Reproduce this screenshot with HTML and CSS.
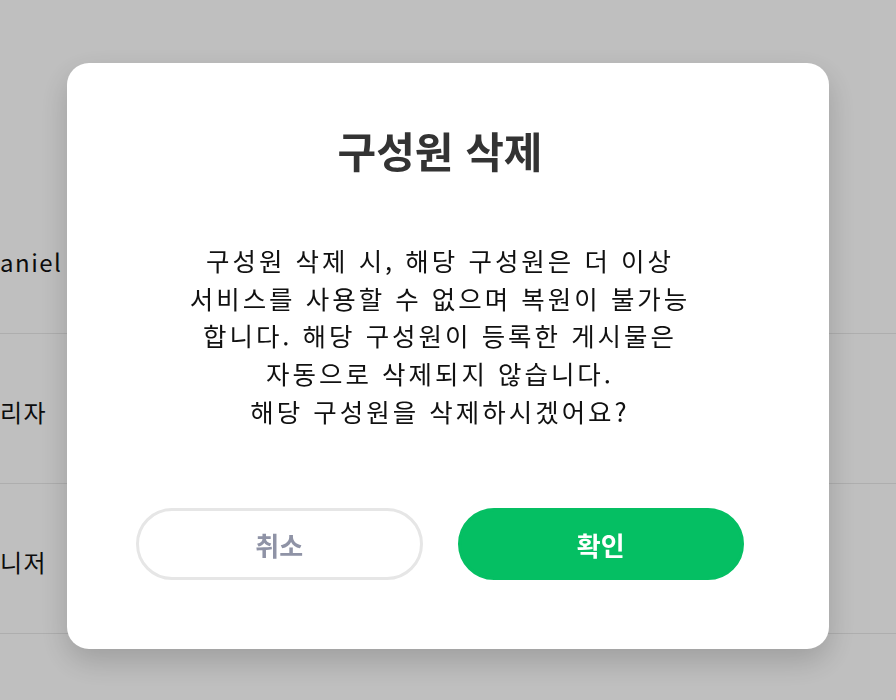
FILE: index.html
```html
<!DOCTYPE html>
<html lang="ko">
<head>
<meta charset="utf-8">
<title>구성원 삭제</title>
<link rel="stylesheet" href="styles.css">
</head>
<body>
<div class="page">
  <div class="header"></div>
  <ul class="members">
    <li class="row"><span class="name">aniel</span></li>
    <li class="row"><span class="name">리자</span></li>
    <li class="row"><span class="name">니저</span></li>
  </ul>
</div>
<div class="overlay">
  <div class="modal" role="dialog" aria-labelledby="modal-title">
    <h2 class="modal-title" id="modal-title">구성원 삭제</h2>
    <p class="modal-text">구성원 삭제 시, 해당 구성원은 더 이상<br>서비스를 사용할 수 없으며 복원이 불가능<br>합니다. 해당 구성원이 등록한 게시물은<br>자동으로 삭제되지 않습니다.<br>해당 구성원을 삭제하시겠어요?</p>
    <div class="actions">
      <button class="btn btn-cancel" type="button">취소</button>
      <button class="btn btn-confirm" type="button">확인</button>
    </div>
  </div>
</div>
</body>
</html>
```
FILE: styles.css
```css
* { box-sizing: border-box; }
html, body {
  margin: 0;
  padding: 0;
  width: 896px;
  height: 700px;
  overflow: hidden;
  background: #ffffff;
  font-family: "Noto Sans CJK KR", "Noto Sans", sans-serif;
}
.page {
  width: 896px;
  height: 700px;
  overflow: hidden;
}
.header {
  height: 184px;
}
.members {
  list-style: none;
  margin: 0;
  padding: 0;
}
.row {
  height: 150px;
  border-bottom: 1px solid #e8e8e8;
  display: flex;
  align-items: center;
  padding-top: 6px;
}
.name {
  font-size: 24px;
  letter-spacing: 1.5px;
  color: #111;
}
.overlay {
  position: fixed;
  inset: 0;
  background: rgba(0, 0, 0, 0.25);
  display: flex;
  align-items: flex-start;
  justify-content: flex-start;
  padding: 63px 0 0 67px;
}
.modal {
  width: 762px;
  height: 586px;
  background: #ffffff;
  border-radius: 22px;
  box-shadow: 0 12px 30px rgba(0, 0, 0, 0.18);
  padding: 0 85px 69px 69px;
  display: flex;
  flex-direction: column;
  align-items: center;
}
.modal-title {
  margin: 0;
  padding-top: 57px;
  font-size: 42px;
  line-height: 60px;
  font-weight: 700;
  color: #333333;
  text-align: center;
}
.modal-text {
  margin: 61px 0 0;
  font-size: 25.5px;
  line-height: 37.7px;
  letter-spacing: 3px;
  color: #111111;
  text-align: center;
}
.actions {
  margin-top: auto;
  width: 100%;
  display: flex;
  gap: 35px;
}
.btn {
  flex: 1 1 0;
  height: 72px;
  padding: 0;
  border-radius: 36px;
  border: 3px solid transparent;
  font-family: inherit;
  font-size: 26px;
  font-weight: 700;
  cursor: pointer;
}
.btn-cancel {
  background: #ffffff;
  border-color: #e6e6e6;
  color: #8f93a6;
}
.btn-confirm {
  background: #05bf63;
  border-color: #05bf63;
  color: #ffffff;
}
```
